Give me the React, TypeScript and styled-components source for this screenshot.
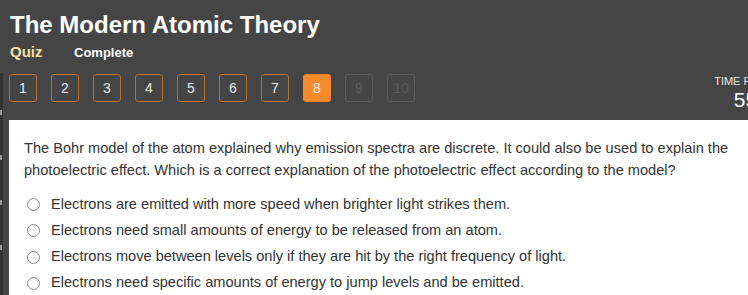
import React from "react";
import styled, { createGlobalStyle } from "styled-components";

const GlobalStyle = createGlobalStyle`
  html, body {
    margin: 0;
    padding: 0;
    background: #454545;
    overflow: hidden;
  }
  body {
    font-family: "Liberation Sans", Arial, sans-serif;
  }
`;

const Page = styled.div`
  width: 748px;
  height: 295px;
  display: flex;
  background: #454545;
  overflow: hidden;
`;

const Rail = styled.div`
  width: 3px;
  margin-top: 73px;
  background: #333;
  display: flex;
  flex-direction: column;
  padding-top: 37px;
  gap: 40px;
  flex-shrink: 0;
`;

const RailMark = styled.span`
  display: block;
  width: 2px;
  height: 5px;
  background: #999;
`;

const Main = styled.div`
  flex: 1;
  min-width: 0;
  display: flex;
  flex-direction: column;
  padding-left: 6px;
`;

const Header = styled.header`
  padding: 11px 0 0 1px;
`;

const Title = styled.h1`
  margin: 0;
  font-size: 24px;
  line-height: 28px;
  font-weight: bold;
  color: #fff;
`;

const SubRow = styled.div`
  display: flex;
  align-items: baseline;
  margin-top: 4px;
`;

const Kind = styled.span`
  font-size: 15px;
  font-weight: bold;
  color: #f2e2a8;
  width: 64px;
`;

const Status = styled.span`
  font-size: 13px;
  font-weight: bold;
  color: #fff;
`;

const NavRow = styled.nav`
  display: flex;
  align-items: flex-start;
  margin-top: 14px;
  margin-right: -62px;
  height: 46px;
`;

const Steps = styled.div`
  display: flex;
  gap: 14px;
`;

const Step = styled.button<{ $state: "done" | "current" | "locked" }>`
  width: 28px;
  height: 28px;
  box-sizing: border-box;
  padding: 0;
  border-radius: 3px;
  font-family: inherit;
  font-size: 14px;
  display: flex;
  align-items: center;
  justify-content: center;
  border: 1px solid
    ${(p) =>
      p.$state === "current" ? "#f78b2c" : p.$state === "locked" ? "#595959" : "#b8732e"};
  background: ${(p) => (p.$state === "current" ? "#f78b2c" : "transparent")};
  color: ${(p) => (p.$state === "locked" ? "#5c5c5c" : "#e8e8e8")};
`;

const Timer = styled.div`
  margin-left: auto;
  display: flex;
  flex-direction: column;
  align-items: center;
  color: #e6e6e6;
  width: 100px;
  margin-top: 1px;
`;

const TimerLabel = styled.span`
  font-size: 11px;
  line-height: 13px;
  text-transform: uppercase;
`;

const TimerValue = styled.span`
  font-size: 21px;
  line-height: 24px;
  color: #fff;
`;

const Panel = styled.section`
  flex: 1;
  background: #fff;
  margin-right: -20px;
  padding: 17px 30px 0 15px;
  color: #333;
`;

const Question = styled.p`
  margin: 0 0 13px;
  font-size: 14.6px;
  line-height: 22px;
`;

const Options = styled.ul`
  list-style: none;
  margin: 0;
  padding: 0 0 0 3px;
  display: flex;
  flex-direction: column;
  gap: 4.4px;
`;

const Option = styled.label`
  display: flex;
  align-items: center;
  gap: 11px;
  font-size: 14.6px;
  line-height: 21.7px;
`;

const Radio = styled.span`
  width: 13px;
  height: 13px;
  box-sizing: border-box;
  border: 1px solid #8a8a8a;
  border-radius: 50%;
  flex-shrink: 0;
`;

const steps = Array.from({ length: 10 }, (_, i) => i + 1);
const current = 8;

const answers = [
  "Electrons are emitted with more speed when brighter light strikes them.",
  "Electrons need small amounts of energy to be released from an atom.",
  "Electrons move between levels only if they are hit by the right frequency of light.",
  "Electrons need specific amounts of energy to jump levels and be emitted.",
];

export default function App() {
  return (
    <Page>
      <GlobalStyle />
      <Rail>
        <RailMark />
        <RailMark />
        <RailMark />
        <RailMark />
      </Rail>
      <Main>
        <Header>
          <Title>The Modern Atomic Theory</Title>
          <SubRow>
            <Kind>Quiz</Kind>
            <Status>Complete</Status>
          </SubRow>
        </Header>
        <NavRow>
          <Steps>
            {steps.map((n) => (
              <Step
                key={n}
                $state={n === current ? "current" : n > current ? "locked" : "done"}
              >
                {n}
              </Step>
            ))}
          </Steps>
          <Timer>
            <TimerLabel>Time Remaining</TimerLabel>
            <TimerValue>55:12</TimerValue>
          </Timer>
        </NavRow>
        <Panel>
          <Question>
            The Bohr model of the atom explained why emission spectra are discrete. It could
            also be used to explain the photoelectric effect. Which is a correct explanation
            of the photoelectric effect according to the model?
          </Question>
          <Options>
            {answers.map((a) => (
              <li key={a}>
                <Option>
                  <Radio />
                  {a}
                </Option>
              </li>
            ))}
          </Options>
        </Panel>
      </Main>
    </Page>
  );
}
